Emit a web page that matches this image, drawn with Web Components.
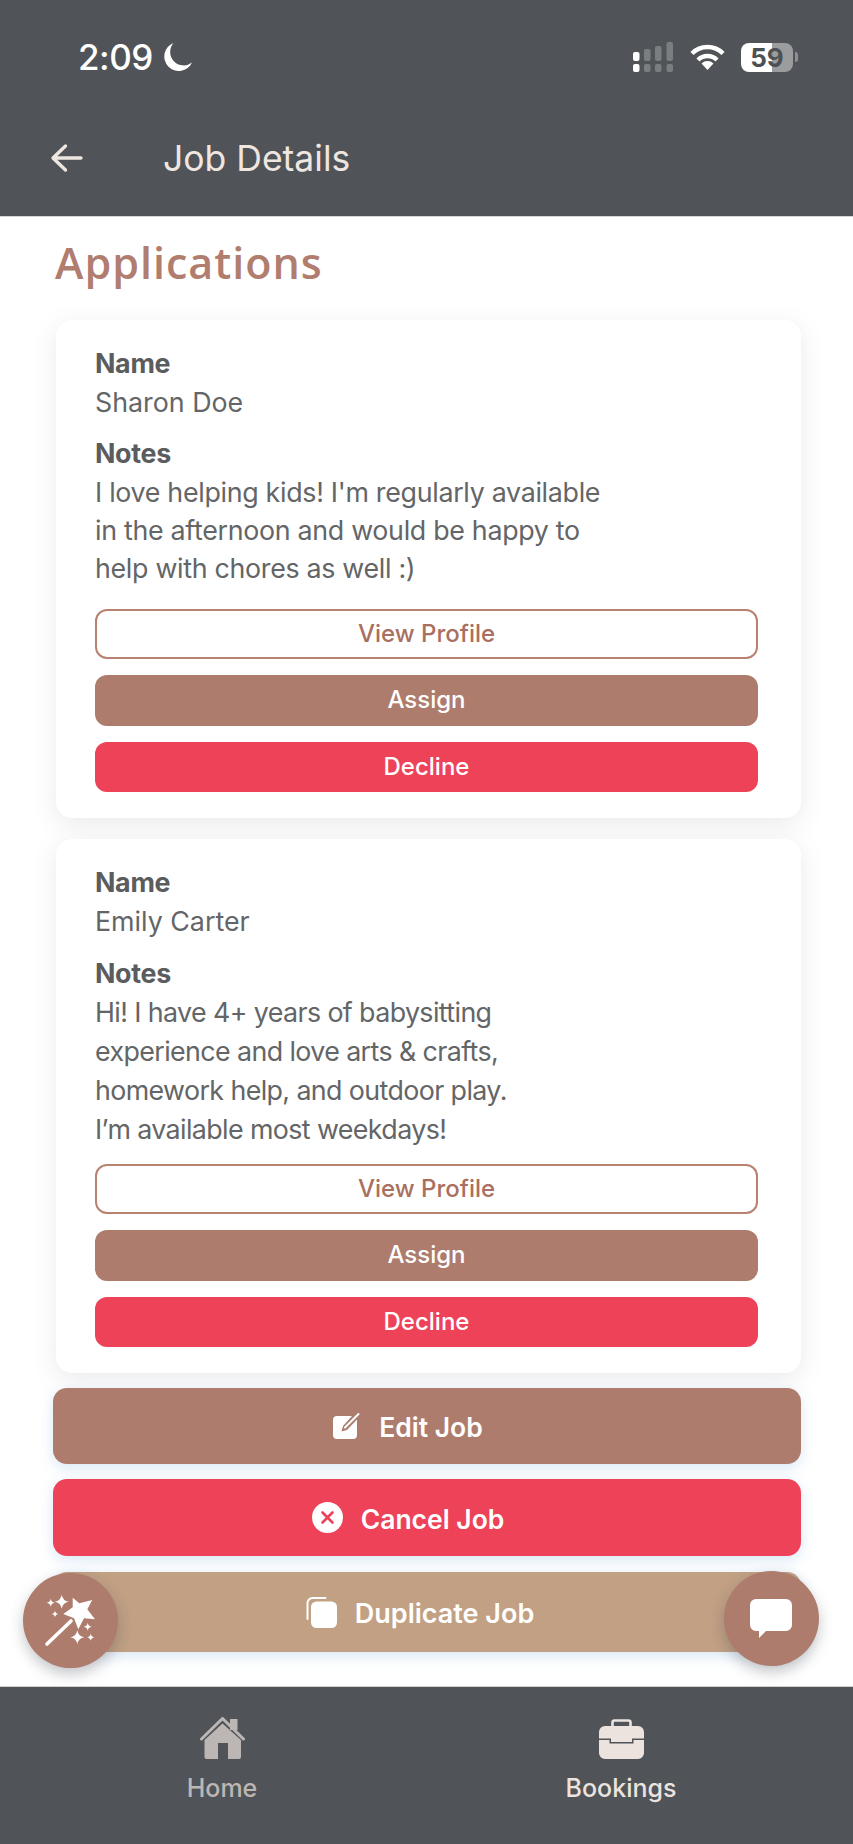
<!DOCTYPE html>
<html>
<head>
<meta charset="utf-8">
<title>Job Details</title>
<style>
  html, body { margin: 0; padding: 0; background: #fff; }
  body { font-family: Inter, "Liberation Sans", sans-serif; }
</style>
</head>
<body>
<job-details-screen>
  <applicant-card name="Sharon Doe" style="--notes-lh: 38px;">
    I love helping kids! I'm regularly available<br>in the afternoon and would be happy to<br>help with chores as well :)
  </applicant-card>
  <applicant-card name="Emily Carter" style="--notes-top: 14px; --notes-gap: 15px; --notes-lh: 39px; --notes-ls: -0.6px; margin-top: 21px;">
    Hi! I have 4+ years of babysitting<br>experience and love arts &amp; crafts,<br>homework help, and outdoor play.<br>I’m available most weekdays!
  </applicant-card>
  <action-button kind="edit" style="--h: 76px; --shift: 38px; margin-top: 15px;">Edit Job</action-button>
  <action-button kind="cancel" style="--h: 77px; --shift: 38px; margin-top: 15px;">Cancel Job</action-button>
  <action-button kind="duplicate" style="--h: 80px; --shift: 14px; margin-top: 16px;">Duplicate Job</action-button>
</job-details-screen>

<script>
const ICONS = {
  edit: `<svg width="28" height="28" viewBox="0 0 28 28"><path fill="#fff" d="M4 4h15l-9 10-1.500 5.500 5.500-1.500 10-10.500v15.500a4 4 0 0 1-4 4h-16a4 4 0 0 1-4-4v-15a4 4 0 0 1 4-4z"/><path d="M12 15.500 25.500 2" stroke="#fff" stroke-width="2" stroke-linecap="round"/></svg>`,
  cancel: `<svg width="31" height="31" viewBox="0 0 31 31"><circle cx="15.500" cy="15.500" r="15.500" fill="#fff"/><path d="M10.500 10.500l10 10m0-10l-10 10" stroke="#ee4259" stroke-width="2.600" stroke-linecap="round"/></svg>`,
  duplicate: `<svg width="31" height="31" viewBox="0 0 31 31"><path d="M1.500 22V6a5 5 0 0 1 5-5h13" fill="none" stroke="#fff" stroke-width="2" stroke-linecap="round"/><rect x="5" y="4.500" width="26" height="26.500" rx="5.500" fill="#fff"/></svg>`
};

class StatusBar extends HTMLElement {
  constructor() {
    super();
    this.attachShadow({ mode: 'open' });
    this.shadowRoot.innerHTML = `
      <style>
        :host { display: flex; align-items: center; justify-content: space-between; height: 50px; padding: 0 55px 0 78px; margin-top: 32px; color: #fff; }
        .time { display: flex; align-items: center; gap: 10px; font: 500 35px/50px Inter, "Liberation Sans", sans-serif; letter-spacing: -0.5px; }
        .right { display: flex; align-items: center; gap: 16px; }
        .battery { position: relative; width: 52px; height: 29px; border-radius: 8px; overflow: hidden; background: linear-gradient(90deg, #fff 60%, #9a9c9e 60%); color: #4d5154; font: 700 26px/29px Inter, "Liberation Sans", sans-serif; text-align: center; }
        .batt-wrap { display: flex; align-items: center; gap: 2px; }
        .nub { width: 3px; height: 10px; background: #8d9092; border-radius: 0 3px 3px 0; }
      </style>
      <div class="time"><span>2:09</span>
        <svg width="29" height="29" viewBox="0 0 29 29"><path fill="#fff" d="M10.500 0A14.500 14.500 0 1 0 29 19.500 13.500 13.500 0 0 1 10.500 0z"/></svg>
      </div>
      <div class="right">
        <svg width="41" height="30" viewBox="0 0 41 30">
          <rect x="0" y="10" width="6.500" height="9" rx="2" fill="#fff"/>
          <rect x="11" y="7" width="6.500" height="12" rx="2" fill="#7b7e81"/>
          <rect x="22" y="4" width="6.500" height="15" rx="2" fill="#7b7e81"/>
          <rect x="33.500" y="0" width="6.500" height="19" rx="2" fill="#7b7e81"/>
          <rect x="0" y="22" width="6.500" height="8" rx="2" fill="#fff"/>
          <rect x="11" y="22" width="6.500" height="8" rx="2" fill="#7b7e81"/>
          <rect x="22" y="22" width="6.500" height="8" rx="2" fill="#7b7e81"/>
          <rect x="33.500" y="22" width="6.500" height="8" rx="2" fill="#7b7e81"/>
        </svg>
        <svg width="35" height="26" viewBox="0 0 35 26" fill="none" stroke="#fff" stroke-width="4.500">
          <path d="M2 9.500a22 22 0 0 1 31 0"/>
          <path d="M8 16a13.500 13.500 0 0 1 19 0"/>
          <path d="M17.500 26l-6-6.500a8.500 8.500 0 0 1 12 0z" fill="#fff" stroke="none"/>
        </svg>
        <div class="batt-wrap"><div class="battery">59</div><div class="nub"></div></div>
      </div>
    `;
  }
}

class AppHeader extends HTMLElement {
  constructor() {
    super();
    this.attachShadow({ mode: 'open' });
    this.shadowRoot.innerHTML = `
      <style>
        :host { display: block; height: 216px; box-sizing: border-box; overflow: hidden; background: #505458; box-shadow: 0 1px 0 #d6d6d6; position: relative; z-index: 1; }
        .bar { display: flex; align-items: center; height: 50px; margin-top: 51px; padding-left: 50px; color: #efe6e0; }
        h1 { margin: 0 0 0 80px; padding-top: 2px; font: 400 35.500px/50px Inter, "Liberation Sans", sans-serif; letter-spacing: 0; }
      </style>
      <status-bar></status-bar>
      <div class="bar">
        <svg width="33" height="30" viewBox="0 0 33 30" fill="none" stroke="#efe6e0" stroke-width="3.400" stroke-linecap="round" stroke-linejoin="round"><path d="M15.500 3 3 15l12.500 12M3.500 15H31"/></svg>
        <h1>Job Details</h1>
      </div>
    `;
  }
}

class AppField extends HTMLElement {
  constructor() {
    super();
    this.attachShadow({ mode: 'open' });
    this.shadowRoot.innerHTML = `
      <style>
        :host { display: block; font: 400 26.800px/38.500px Inter, "Liberation Sans", sans-serif; color: #636567; }
        b { display: block; font-weight: 700; letter-spacing: -0.3px; color: #5a5c5e; }
      </style>
      <b></b><slot></slot>
    `;
  }
  connectedCallback() {
    this.shadowRoot.querySelector('b').textContent = this.getAttribute('label');
  }
}

class ApplicantCard extends HTMLElement {
  constructor() {
    super();
    this.attachShadow({ mode: 'open' });
  }

  connectedCallback() {
    this.shadowRoot.innerHTML = `
      <style>
        :host { display: block; margin-left: 3px; background: #fff; border-radius: 16px; box-shadow: 0 6px 24px rgba(90, 95, 105, 0.13); }
        .inner { padding: 24px 43px 26px 39px; }
        .notes { margin-top: var(--notes-top, 13px); margin-bottom: var(--notes-gap, 22px); }
        .notes span { display: block; line-height: var(--notes-lh, 38.500px); letter-spacing: var(--notes-ls, -0.3px); }
        .actions { display: flex; flex-direction: column; gap: 16px; }
      </style>
      <div class="inner">
        <app-field label="Name">${this.getAttribute('name')}</app-field>
        <app-field class="notes" label="Notes"><span><slot></slot></span></app-field>
        <div class="actions">
          <small-button variant="outline">View Profile</small-button>
          <small-button variant="brown">Assign</small-button>
          <small-button variant="red">Decline</small-button>
        </div>
      </div>
    `;
  }
}

class SmallButton extends HTMLElement {
  constructor() {
    super();
    this.attachShadow({ mode: 'open' });
    this.shadowRoot.innerHTML = `
      <style>
        :host { display: flex; align-items: center; justify-content: center; box-sizing: border-box; height: 50.500px; border-radius: 12px; font: 450 24px/1 Inter, "Liberation Sans", sans-serif; color: #fff; }
        :host([variant="outline"]) { background: #fff; border: 2px solid #b9816f; color: #a96f60; }
        :host([variant="brown"]) { background: #ae7c6d; }
        :host([variant="red"]) { background: #ee4259; }
      </style>
      <slot></slot>
    `;
  }
}

class ActionButton extends HTMLElement {
  constructor() {
    super();
    this.attachShadow({ mode: 'open' });
  }

  connectedCallback() {
    const kind = this.getAttribute('kind');
    this.shadowRoot.innerHTML = `
      <style>
        :host { display: flex; align-items: center; justify-content: center; gap: 18px; box-sizing: border-box; height: var(--h, 76px); padding-right: var(--shift, 0); border-radius: 14px; color: #fff; font: 600 26.500px/1 Inter, "Liberation Sans", sans-serif; box-shadow: 0 4px 14px rgba(120, 170, 220, 0.28); }
        :host([kind="edit"]) { background: #ae7c6d; }
        :host([kind="cancel"]) { background: #ee4259; }
        :host([kind="duplicate"]) { background: #c1a084; font-size: 27px; }
        svg { display: block; flex: none; }
        span { padding-top: 3px; }
      </style>
      ${ICONS[kind]}
      <span><slot></slot></span>
    `;
  }
}

class FabButton extends HTMLElement {
  constructor() {
    super();
    this.attachShadow({ mode: 'open' });
    this.shadowRoot.innerHTML = `
      <style>
        :host { display: block; position: absolute; width: 95px; height: 95px; border-radius: 50%; background: #ae7c6d; box-shadow: 0 6px 14px rgba(60, 65, 75, 0.3); }
        ::slotted(svg) { display: block; }
      </style>
      <slot></slot>
    `;
  }
}

class NavItem extends HTMLElement {
  constructor() {
    super();
    this.attachShadow({ mode: 'open' });
    this.shadowRoot.innerHTML = `
      <style>
        :host { display: flex; flex-direction: column; align-items: center; width: 140px; color: #bcb7b4; font: 500 25px/36px Inter, "Liberation Sans", sans-serif; }
        :host([active]) { color: #ece3de; }
        .icon { height: 42px; margin-bottom: 11px; display: flex; align-items: flex-end; }
      </style>
      <div class="icon"><slot name="icon"></slot></div>
      <slot></slot>
    `;
  }
}

class BottomNav extends HTMLElement {
  constructor() {
    super();
    this.attachShadow({ mode: 'open' });
    this.shadowRoot.innerHTML = `
      <style>
        :host { display: flex; justify-content: space-between; box-sizing: border-box; height: 157px; padding: 30px 162px 0 152px; background: #505458; box-shadow: 0 -1px 0 #d0d0d0; position: relative; }
      </style>
      <nav-item>
        <svg slot="icon" width="45" height="42" viewBox="0 0 45 42">
          <path fill="#bcb7b4" d="M30 2h7.500v11H30z"/>
          <path fill="#bcb7b4" d="M22.500 6.500 41 23v17a2 2 0 0 1-2 2H28V26H18v16H6.500a2 2 0 0 1-2-2V23z"/>
          <path d="M1.500 22 22.500 1.500 43.500 22" fill="none" stroke="#bcb7b4" stroke-width="3" stroke-linecap="round" stroke-linejoin="round"/>
        </svg>
        Home
      </nav-item>
      <nav-item active>
        <svg slot="icon" width="45" height="40" viewBox="0 0 45 40">
          <path d="M13.500 7V3.500a2 2 0 0 1 2-2h14a2 2 0 0 1 2 2V7" fill="none" stroke="#ece3de" stroke-width="2.600"/>
          <path fill="#ece3de" d="M6 7h33a6 6 0 0 1 6 6v6.500H33v3.500H12v-3.500H0V13a6 6 0 0 1 6-6z"/>
          <path fill="#ece3de" d="M0 21h10.500v3.500h24V21H45v13a6 6 0 0 1-6 6H6a6 6 0 0 1-6-6z"/>
        </svg>
        Bookings
      </nav-item>
    `;
  }
}

class JobDetailsScreen extends HTMLElement {
  constructor() {
    super();
    this.attachShadow({ mode: 'open' });
    this.shadowRoot.innerHTML = `
      <style>
        :host { display: flex; flex-direction: column; width: 853px; height: 1844px; overflow: hidden; position: relative; background: #fff; }
        main { flex: 1; padding: 0 52px 0 53px; min-height: 0; }
        h2 { margin: 0 0 0 2px; padding-top: 22px; height: 104px; box-sizing: border-box; font: 600 43px/50px "Open Sans", "Liberation Sans", sans-serif; letter-spacing: 1px; color: #b07d6e; }
        .wand { left: 23px; top: 1573px; }
        .chat { left: 724px; top: 1571px; }
      </style>
      <app-header></app-header>
      <main>
        <h2>Applications</h2>
        <slot></slot>
      </main>
      <fab-button class="wand">
        <svg width="95" height="95" viewBox="0 0 95 95" fill="#fff">
          <path d="M49.700 24.700 56.300 30.300 69.300 27 64.300 36.300 72 46.300 61 45.300 55.300 56.300 51 45.300 40.300 41 49.700 34.300z"/>
          <path d="M24 71 48 48" stroke="#fff" stroke-width="3.600" stroke-linecap="round"/>
          <path d="M38.700 21.700q1 6 7 7-6 1-7 7-1-6-7-7 6-1 7-7z"/>
          <path d="M27.700 25.700q.500 3.500 4 4-3.500.500-4 4-.500-3.500-4-4 3.500-.500 4-4z"/>
          <path d="M32 38q.500 2.500 3 3-2.500.500-3 3-.500-2.500-3-3 2.500-.500 3-3z"/>
          <path d="M64.700 49.700q.500 3.500 4 4-3.500.500-4 4-.500-3.500-4-4 3.500-.500 4-4z"/>
          <path d="M54.300 57.300q1 6 7 7-6 1-7 7-1-6-7-7 6-1 7-7z"/>
          <path d="M67.700 60.800q.500 3 3.500 3.500-3 .500-3.500 3.500-.500-3-3.500-3.500 3-.500 3.500-3.500z"/>
        </svg>
      </fab-button>
      <fab-button class="chat">
        <svg width="95" height="95" viewBox="0 0 95 95">
          <path fill="#fff" d="M32 28h30a6 6 0 0 1 6 6v20a6 6 0 0 1-6 6H42l-7 7v-7h-3a6 6 0 0 1-6-6V34a6 6 0 0 1 6-6z"/>
        </svg>
      </fab-button>
      <bottom-nav></bottom-nav>
    `;
  }
}

customElements.define('status-bar', StatusBar);
customElements.define('app-header', AppHeader);
customElements.define('app-field', AppField);
customElements.define('small-button', SmallButton);
customElements.define('applicant-card', ApplicantCard);
customElements.define('action-button', ActionButton);
customElements.define('fab-button', FabButton);
customElements.define('nav-item', NavItem);
customElements.define('bottom-nav', BottomNav);
customElements.define('job-details-screen', JobDetailsScreen);
</script>
</body>
</html>
